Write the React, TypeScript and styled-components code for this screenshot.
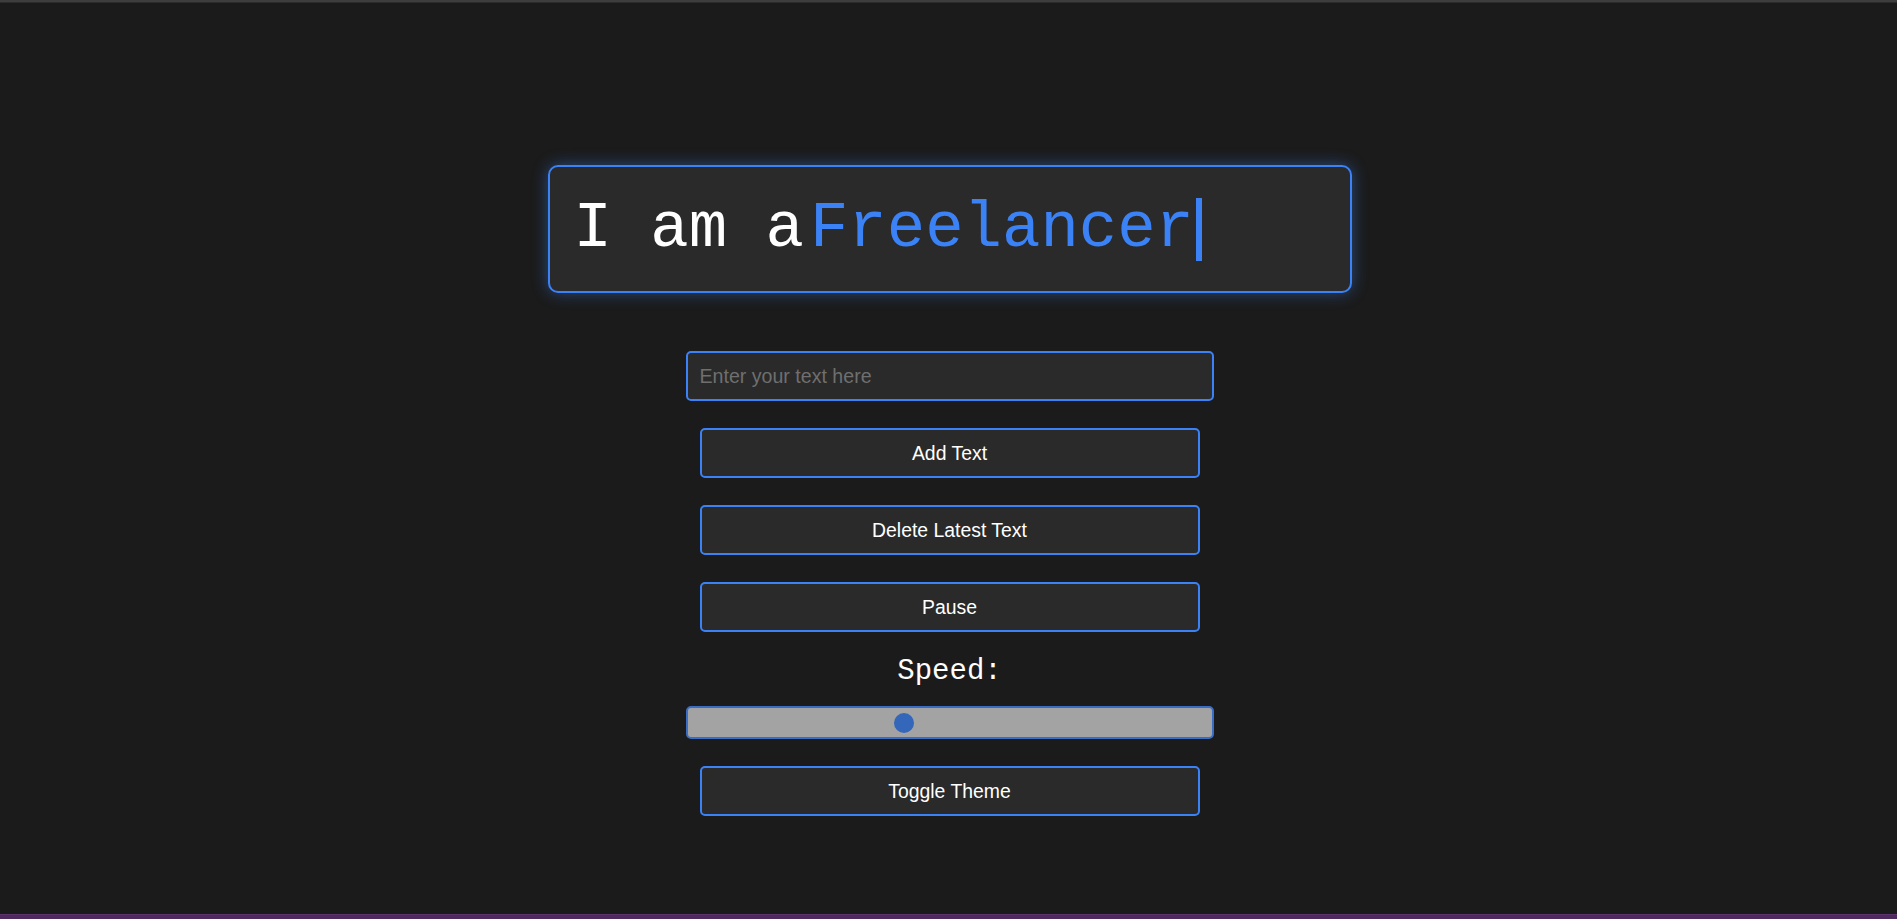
import React, { useState } from "react";
import styled, { createGlobalStyle } from "styled-components";

const MONO = `"Courier New", "Nimbus Mono PS", "Nimbus Mono L", FreeMono, "Liberation Mono", monospace`;

const GlobalStyle = createGlobalStyle`
  html, body {
    margin: 0;
    padding: 0;
    height: 100%;
    background: #1b1b1b;
  }
  #root {
    height: 100%;
  }
  * {
    box-sizing: border-box;
  }
`;

const Page = styled.div`
  height: 100vh;
  display: flex;
  flex-direction: column;
  background: #1b1b1b;
  overflow: hidden;
`;

const TopStrip = styled.div`
  height: 3px;
  flex: none;
  background: #3d3d3d;
  border-bottom: 1px solid #2c2c2c;
`;

const BottomStrip = styled.div`
  height: 5px;
  flex: none;
  background: #4f2a5e;
  border-top: 1px solid #5d3470;
`;

const Main = styled.main`
  flex: 1;
  display: flex;
  flex-direction: column;
  align-items: center;
  padding-top: 162px;
  padding-left: 2px;
`;

const Display = styled.div`
  width: 804px;
  height: 128px;
  display: flex;
  align-items: center;
  padding: 0 24px;
  background: #2a2a2a;
  border: 2px solid #3b82f6;
  border-radius: 10px;
  box-shadow: 0 0 16px rgba(59, 130, 246, 0.45);
  font-family: ${MONO};
  font-size: 64px;
  white-space: pre;
`;

const StaticText = styled.span`
  color: #ffffff;
`;

const TypedText = styled.span`
  color: #3b82f6;
  margin-left: 6px;
`;

const Cursor = styled.span`
  display: inline-block;
  width: 6px;
  height: 63px;
  margin-left: 2px;
  background: #3b82f6;
`;

const Controls = styled.div`
  display: flex;
  flex-direction: column;
  align-items: center;
  margin-top: 58px;
`;

const TextInput = styled.input`
  width: 528px;
  height: 50px;
  padding: 0 12px;
  background: #2a2a2a;
  border: 2px solid #3b82f6;
  border-radius: 5px;
  color: #ffffff;
  font-family: "Liberation Sans", Arial, sans-serif;
  font-size: 19.6px;
  outline: none;
  &::placeholder {
    color: #6f6f6f;
  }
`;

const ActionButton = styled.button`
  width: 500px;
  height: 50px;
  margin-top: 27px;
  background: #2a2a2a;
  border: 2px solid #3b82f6;
  border-radius: 5px;
  color: #ffffff;
  font-family: "Liberation Sans", Arial, sans-serif;
  font-size: 19.4px;
  cursor: pointer;
`;

const SpeedLabel = styled.label`
  margin-top: 23px;
  color: #ffffff;
  font-family: ${MONO};
  font-size: 29px;
  line-height: 33px;
`;

const Slider = styled.input`
  -webkit-appearance: none;
  appearance: none;
  display: block;
  width: 528px;
  height: 33px;
  margin: 18px 0 0 0;
  padding: 0;
  background: #a3a3a3;
  border: 2px solid #3a6ec6;
  border-radius: 5px;
  outline: none;
  &::-webkit-slider-thumb {
    -webkit-appearance: none;
    appearance: none;
    width: 20px;
    height: 20px;
    border-radius: 50%;
    background: #3466b9;
    border: none;
  }
  &::-moz-range-thumb {
    width: 20px;
    height: 20px;
    border-radius: 50%;
    background: #3466b9;
    border: none;
  }
`;

export default function App() {
  const [text, setText] = useState("");
  const [speed, setSpeed] = useState(41);
  return (
    <Page>
      <GlobalStyle />
      <TopStrip />
      <Main>
        <Display>
          <StaticText>I am a</StaticText>
          <TypedText>Freelancer</TypedText>
          <Cursor />
        </Display>
        <Controls>
          <TextInput
            type="text"
            placeholder="Enter your text here"
            value={text}
            onChange={(e) => setText(e.target.value)}
          />
          <ActionButton>Add Text</ActionButton>
          <ActionButton>Delete Latest Text</ActionButton>
          <ActionButton>Pause</ActionButton>
          <SpeedLabel htmlFor="speed">Speed:</SpeedLabel>
          <Slider
            id="speed"
            type="range"
            min={0}
            max={100}
            value={speed}
            onChange={(e) => setSpeed(Number(e.target.value))}
          />
          <ActionButton>Toggle Theme</ActionButton>
        </Controls>
      </Main>
      <BottomStrip />
    </Page>
  );
}
